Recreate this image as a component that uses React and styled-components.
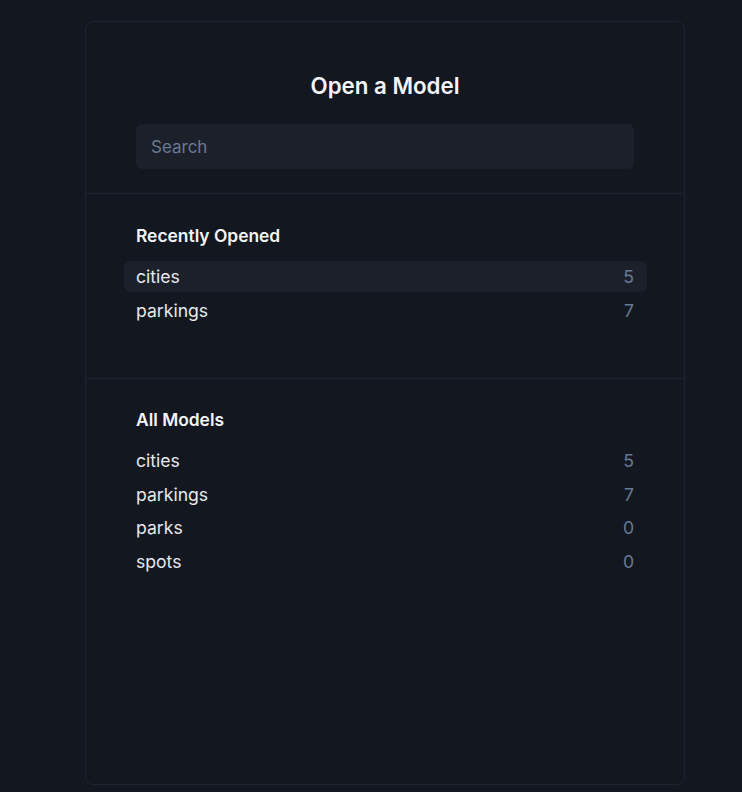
import React, { useState } from "react";
import styled, { createGlobalStyle } from "styled-components";

const recent = [
  { name: "cities", count: 5 },
  { name: "parkings", count: 7 },
];

const models = [
  { name: "cities", count: 5 },
  { name: "parkings", count: 7 },
  { name: "parks", count: 0 },
  { name: "spots", count: 0 },
];

const App = () => {
  const [query, setQuery] = useState("");
  const [hovered] = useState("recent-cities");

  const filtered = models.filter((m) =>
    m.name.toLowerCase().includes(query.toLowerCase())
  );

  return (
    <>
      <GlobalStyle />
      <Page>
        <Card>
          <Header>
            <Title>Open a Model</Title>
            <SearchInput
              type="text"
              placeholder="Search"
              value={query}
              autoFocus
              onChange={(e) => setQuery(e.target.value)}
            />
          </Header>

          <Section $top={32} $minHeight={185}>
            <SectionTitle>Recently Opened</SectionTitle>
            <List>
              {recent.map((m) => (
                <Row key={m.name} $active={hovered === `recent-${m.name}`}>
                  <Name>{m.name}</Name>
                  <Count>{m.count}</Count>
                </Row>
              ))}
            </List>
          </Section>

          <Section $top={31} $last>
            <SectionTitle>All Models</SectionTitle>
            <List>
              {filtered.map((m) => (
                <Row key={m.name}>
                  <Name>{m.name}</Name>
                  <Count>{m.count}</Count>
                </Row>
              ))}
            </List>
          </Section>
        </Card>
      </Page>
    </>
  );
};

export default App;

const GlobalStyle = createGlobalStyle`
  html, body {
    margin: 0;
    padding: 0;
    background: #131720;
    font-family: Inter, "Noto Sans", sans-serif;
  }
`;

const Page = styled.div`
  display: flex;
  padding: 21px 0 7px 85px;
  height: 792px;
  box-sizing: border-box;
`;

const Card = styled.div`
  width: 600px;
  box-sizing: border-box;
  border: 1px solid #1e2330;
  border-radius: 8px;
  background: #131720;
  display: flex;
  flex-direction: column;
`;

const Header = styled.div`
  display: flex;
  flex-direction: column;
  align-items: center;
  padding: 50px 50px 24px 50px;
  border-bottom: 1px solid #1e2330;
`;

const Title = styled.h2`
  margin: 0 0 24px 0;
  font-size: 22.3px;
  font-weight: 600;
  line-height: 28px;
  color: #f3f5f8;
`;

const SearchInput = styled.input`
  width: 100%;
  height: 45px;
  box-sizing: border-box;
  border: none;
  outline: none;
  border-radius: 6px;
  background: #1c202b;
  padding: 0 15px;
  font-family: Inter, "Noto Sans", sans-serif;
  font-size: 17px;
  color: #e6e9ef;
  caret-color: #e6e9ef;

  &::placeholder {
    color: #687a93;
  }
`;

const Section = styled.div`
  padding: ${(p) => p.$top}px 50px 0 50px;
  min-height: ${(p) => (p.$minHeight ? `${p.$minHeight}px` : "auto")};
  box-sizing: border-box;
  border-bottom: ${(p) => (p.$last ? "none" : "1px solid #1e2330")};
  flex: ${(p) => (p.$last ? 1 : "none")};
`;

const SectionTitle = styled.h3`
  margin: 0 0 15px 0;
  font-size: 17.4px;
  font-weight: 600;
  line-height: 20px;
  color: #f3f5f8;
`;

const List = styled.div`
  display: flex;
  flex-direction: column;
  gap: 2.67px;
`;

const Row = styled.div`
  display: flex;
  justify-content: space-between;
  align-items: center;
  height: 31px;
  margin: 0 -13px 0 -12px;
  padding: 0 13px 0 12px;
  border-radius: 6px;
  background: ${(p) => (p.$active ? "#1c202b" : "transparent")};
  cursor: pointer;
`;

const Name = styled.span`
  font-size: 17.6px;
  color: #e6e9ef;
`;

const Count = styled.span`
  font-size: 17.6px;
  color: #687a93;
`;
